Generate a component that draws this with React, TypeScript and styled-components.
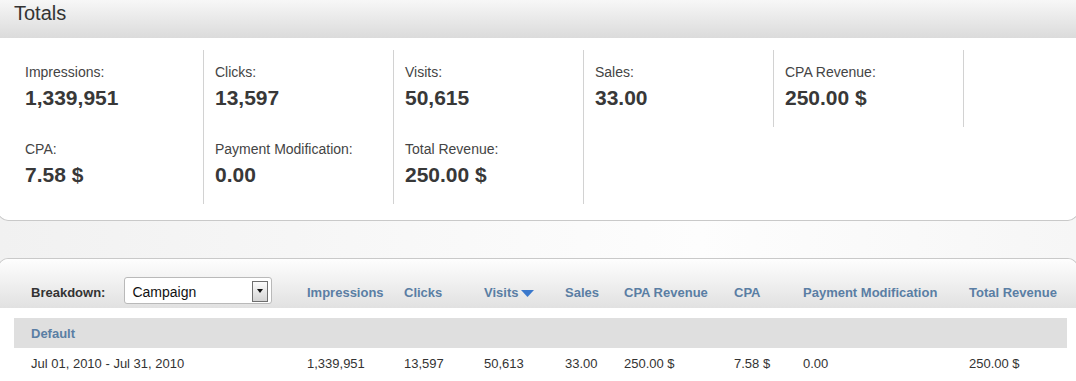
import styled, { createGlobalStyle } from 'styled-components';

const GlobalStyle = createGlobalStyle`
  html, body {
    margin: 0;
    padding: 0;
    overflow: hidden;
    background: #fff;
  }
  body {
    font-family: "Liberation Sans", Arial, sans-serif;
    color: #333;
  }
`;

// shared column widths for the breakdown header and rows
const COLUMNS = '276px 97px 80px 81px 59px 110px 69px 166px 1fr';

const Page = styled.div`
  width: 1076px;
  min-height: 381px;
  background: linear-gradient(to right, #f1f1f1, #fdfdfd 65%, #f6f6f6);
`;

const TotalsHeader = styled.h2`
  margin: 0;
  height: 38px;
  box-sizing: border-box;
  padding: 1px 0 0 14px;
  font-size: 20px;
  font-weight: normal;
  line-height: 24px;
  color: #333;
  background: linear-gradient(#f7f7f7, #dbdbdb);
`;

const StatsCard = styled.div`
  margin: 0 -2px;
  padding: 12px 0 16px 15px;
  background: #fff;
  border: 1px solid #c9c9c9;
  border-top: none;
  border-radius: 0 0 10px 10px;
`;

const StatGrid = styled.div`
  display: flex;
  flex-wrap: wrap;
  width: 950px;
`;

const StatCell = styled.div`
  width: 190px;
  height: 77px;
  box-sizing: border-box;
  padding: 14px 0 0 11px;
  border-right: 1px solid #d2d2d2;
`;

const StatLabel = styled.div`
  font-size: 14px;
  line-height: 16px;
  color: #444;
`;

const StatValue = styled.div`
  margin-top: 6px;
  font-size: 21px;
  font-weight: bold;
  line-height: 24px;
  color: #383838;
`;

const Spacer = styled.div`
  height: 37px;
`;

const Panel = styled.div`
  margin: 0 -2px;
  background: #fff;
  border: 1px solid #c9c9c9;
  border-bottom: none;
  border-radius: 10px 10px 0 0;
  overflow: hidden;
  min-height: 130px;
`;

const Toolbar = styled.div`
  display: grid;
  grid-template-columns: ${COLUMNS};
  height: 49px;
  box-sizing: border-box;
  padding: 18px 0 4px 32px;
  background: linear-gradient(#fefefe, #e1e1e1);
`;

const BreakdownCell = styled.div`
  display: flex;
  align-items: center;
  gap: 19px;
`;

const BreakdownLabel = styled.span`
  font-size: 13px;
  font-weight: bold;
  color: #333;
  padding-top: 3px;
`;

const Select = styled.div`
  display: flex;
  align-items: center;
  justify-content: space-between;
  width: 148px;
  height: 27px;
  box-sizing: border-box;
  padding: 1px 3px 0 7px;
  background: #fff;
  border: 1px solid #b9b9b9;
  border-radius: 3px;
  font-size: 14px;
  color: #111;

  & > span:first-child {
    padding-top: 2px;
  }
`;

const SelectButton = styled.span`
  display: flex;
  align-items: center;
  justify-content: center;
  width: 16px;
  height: 21px;
  box-sizing: border-box;
  border: 1px solid #6f6f6f;
  background: linear-gradient(#fbfbfb, #d4d4d4);

  &::after {
    content: '';
    border-left: 3.5px solid transparent;
    border-right: 3.5px solid transparent;
    border-top: 4px solid #111;
  }
`;

const ColumnHead = styled.span`
  align-self: end;
  display: flex;
  align-items: center;
  gap: 3px;
  padding-bottom: 3px;
  font-size: 13px;
  font-weight: bold;
  line-height: 16px;
  color: #5a7ea4;
  white-space: nowrap;
`;

const GroupRow = styled.div`
  margin: 10px 10px 0 15px;
  height: 30px;
  box-sizing: border-box;
  padding: 8px 0 0 17px;
  background: #dfdfdf;
  font-size: 13px;
  font-weight: bold;
  line-height: 16px;
  color: #5a7ea4;
`;

const DataRow = styled.div`
  display: grid;
  grid-template-columns: ${COLUMNS};
  padding: 8px 0 0 32px;
  font-size: 13px;
  line-height: 16px;
  color: #333;
`;

const SortArrow = () => (
  <svg width="13" height="7" viewBox="0 0 13 7">
    <path d="M0 0 H13 L6.5 7 Z" fill="#3a78cc" />
  </svg>
);

const stats = [
  { label: 'Impressions:', value: '1,339,951' },
  { label: 'Clicks:', value: '13,597' },
  { label: 'Visits:', value: '50,615' },
  { label: 'Sales:', value: '33.00' },
  { label: 'CPA Revenue:', value: '250.00 $' },
  { label: 'CPA:', value: '7.58 $' },
  { label: 'Payment Modification:', value: '0.00' },
  { label: 'Total Revenue:', value: '250.00 $' },
];

const headers = [
  'Impressions',
  'Clicks',
  'Visits',
  'Sales',
  'CPA Revenue',
  'CPA',
  'Payment Modification',
  'Total Revenue',
];

const row = [
  'Jul 01, 2010 - Jul 31, 2010',
  '1,339,951',
  '13,597',
  '50,613',
  '33.00',
  '250.00 $',
  '7.58 $',
  '0.00',
  '250.00 $',
];

export default function App() {
  return (
    <Page>
      <GlobalStyle />
      <TotalsHeader>Totals</TotalsHeader>
      <StatsCard>
        <StatGrid>
          {stats.map((s) => (
            <StatCell key={s.label}>
              <StatLabel>{s.label}</StatLabel>
              <StatValue>{s.value}</StatValue>
            </StatCell>
          ))}
        </StatGrid>
      </StatsCard>
      <Spacer />
      <Panel>
        <Toolbar>
          <BreakdownCell>
            <BreakdownLabel>Breakdown:</BreakdownLabel>
            <Select>
              <span>Campaign</span>
              <SelectButton />
            </Select>
          </BreakdownCell>
          {headers.map((h) => (
            <ColumnHead key={h}>
              {h}
              {h === 'Visits' && <SortArrow />}
            </ColumnHead>
          ))}
        </Toolbar>
        <GroupRow>Default</GroupRow>
        <DataRow>
          {row.map((c, i) => (
            <span key={i}>{c}</span>
          ))}
        </DataRow>
      </Panel>
    </Page>
  );
}
